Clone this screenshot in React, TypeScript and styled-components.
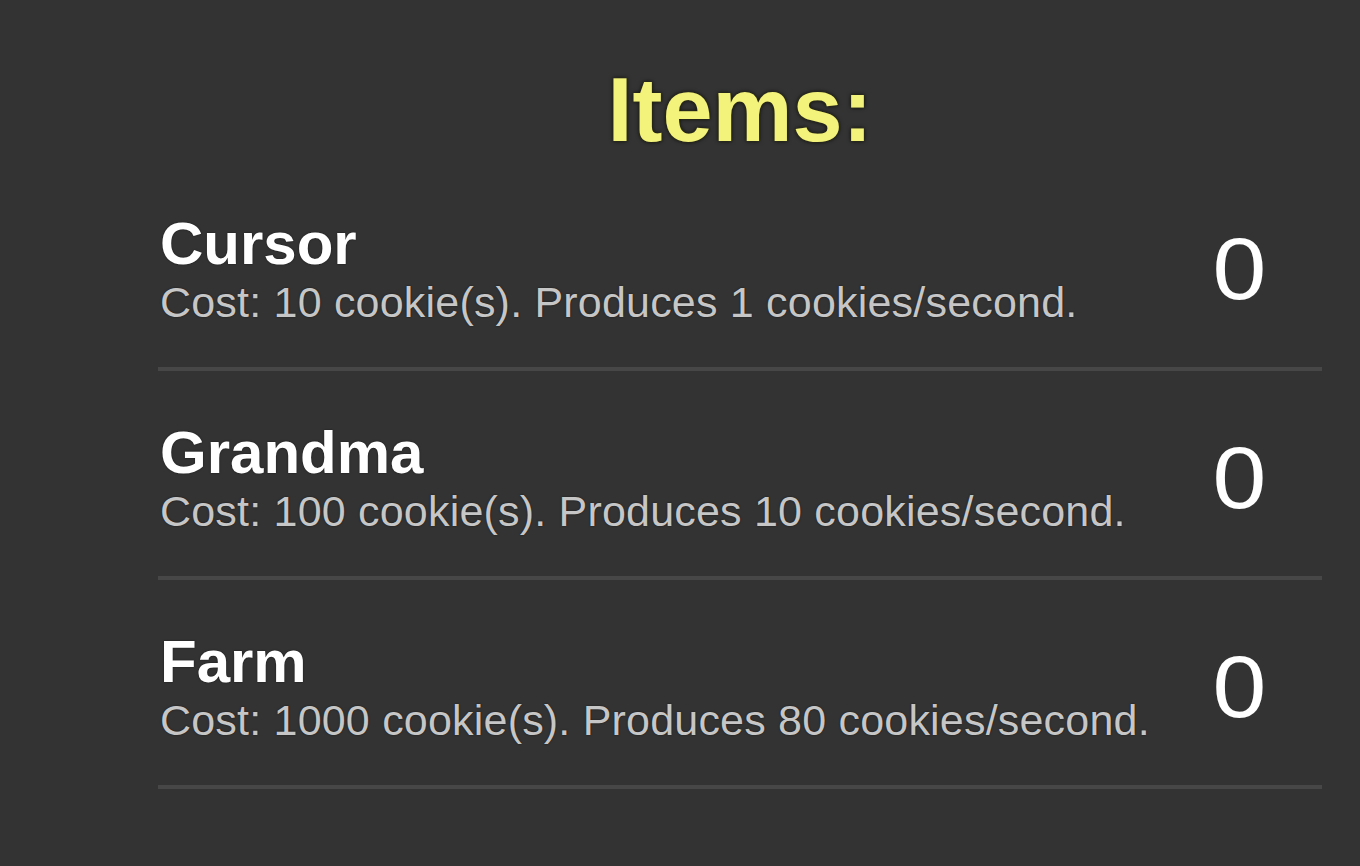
import React from "react";
import styled, { createGlobalStyle } from "styled-components";

const GlobalStyle = createGlobalStyle`
  html, body {
    margin: 0;
    padding: 0;
    background: #333333;
  }
  body {
    font-family: "Liberation Sans", Arial, Helvetica, sans-serif;
    min-height: 866px;
  }
`;

const Page = styled.main`
  padding-top: 65px;
  padding-left: 158px;
  width: 1164px;
`;

const Title = styled.h1`
  margin: 0 0 7px;
  font-size: 90px;
  line-height: 90px;
  font-weight: 700;
  text-align: center;
  color: #f3f37c;
  text-shadow: 0 0 2px #3b3a12, 0 0 4px rgba(0, 0, 0, 0.9);
`;

const List = styled.ul`
  list-style: none;
  margin: 0;
  padding: 0;
`;

const Row = styled.li`
  display: flex;
  align-items: center;
  justify-content: space-between;
  padding: 52px 58px 43px 2px;
  border-bottom: 4px solid #474747;
`;

const Info = styled.div`
  display: flex;
  flex-direction: column;
  gap: 7px;
`;

const Name = styled.div`
  font-size: 60px;
  line-height: 60px;
  font-weight: 700;
  color: #ffffff;
  text-shadow: 0 0 2px rgba(0, 0, 0, 0.6);
`;

const Desc = styled.div`
  font-size: 43px;
  line-height: 43px;
  letter-spacing: 0.2px;
  color: #c6c6c6;
  text-shadow: 0 0 2px rgba(0, 0, 0, 0.6);
`;

const Count = styled.div`
  font-size: 88px;
  line-height: 88px;
  font-weight: 400;
  color: #ffffff;
  transform: scaleX(1.1);
`;

const items = [
  { name: "Cursor", cost: 10, rate: 1, count: 0 },
  { name: "Grandma", cost: 100, rate: 10, count: 0 },
  { name: "Farm", cost: 1000, rate: 80, count: 0 },
];

export default function App() {
  return (
    <>
      <GlobalStyle />
      <Page>
        <Title>Items:</Title>
        <List>
          {items.map((it) => (
            <Row key={it.name}>
              <Info>
                <Name>{it.name}</Name>
                <Desc>
                  Cost: {it.cost} cookie(s). Produces {it.rate} cookies/second.
                </Desc>
              </Info>
              <Count>{it.count}</Count>
            </Row>
          ))}
        </List>
      </Page>
    </>
  );
}
